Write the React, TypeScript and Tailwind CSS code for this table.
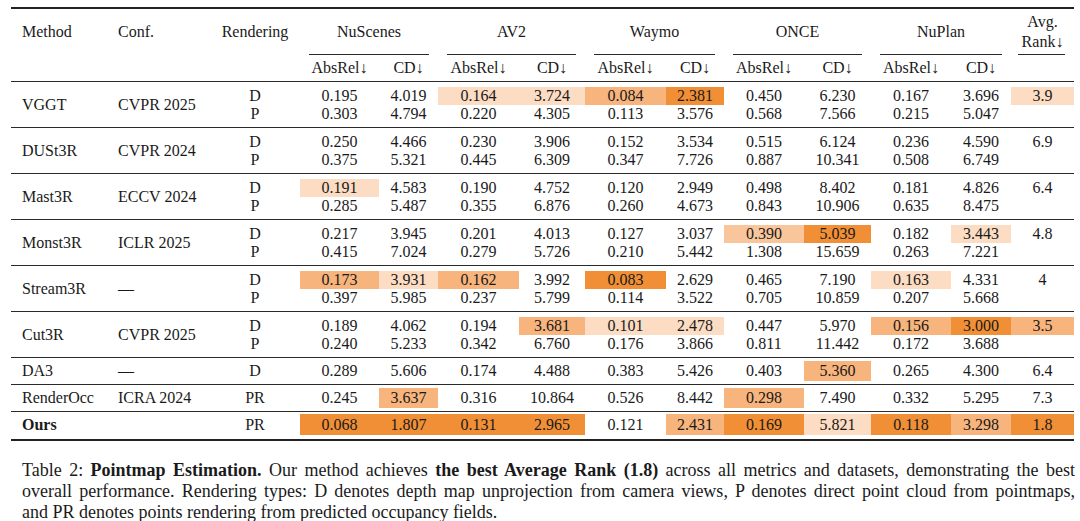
import React from "react";

const COLS =
  "grid grid-cols-[96px_103px_90px_79px_59px_81px_66px_81px_58px_80px_67px_80px_60px_63px]";

const HL: Record<string, string> = {
  l: "bg-[#fcdcc2]",
  m: "bg-[#f7b47c]",
  lm: "bg-[#f9c59a]",
  d: "bg-[#f08f35]",
};

type Row = {
  m: string;
  c: string;
  r: string[];
  v: string[][];
  avg: string;
  hl: Record<number, string>;
  avgHl?: string;
  bold?: boolean;
};

const rows: Row[] = [
  {
    m: "VGGT",
    c: "CVPR 2025",
    r: ["D", "P"],
    v: [
      ["0.195", "4.019", "0.164", "3.724", "0.084", "2.381", "0.450", "6.230", "0.167", "3.696"],
      ["0.303", "4.794", "0.220", "4.305", "0.113", "3.576", "0.568", "7.566", "0.215", "5.047"],
    ],
    avg: "3.9",
    hl: { 2: "l", 3: "l", 4: "m", 5: "d" },
    avgHl: "l",
  },
  {
    m: "DUSt3R",
    c: "CVPR 2024",
    r: ["D", "P"],
    v: [
      ["0.250", "4.466", "0.230", "3.906", "0.152", "3.534", "0.515", "6.124", "0.236", "4.590"],
      ["0.375", "5.321", "0.445", "6.309", "0.347", "7.726", "0.887", "10.341", "0.508", "6.749"],
    ],
    avg: "6.9",
    hl: {},
  },
  {
    m: "Mast3R",
    c: "ECCV 2024",
    r: ["D", "P"],
    v: [
      ["0.191", "4.583", "0.190", "4.752", "0.120", "2.949", "0.498", "8.402", "0.181", "4.826"],
      ["0.285", "5.487", "0.355", "6.876", "0.260", "4.673", "0.843", "10.906", "0.635", "8.475"],
    ],
    avg: "6.4",
    hl: { 0: "l" },
  },
  {
    m: "Monst3R",
    c: "ICLR 2025",
    r: ["D", "P"],
    v: [
      ["0.217", "3.945", "0.201", "4.013", "0.127", "3.037", "0.390", "5.039", "0.182", "3.443"],
      ["0.415", "7.024", "0.279", "5.726", "0.210", "5.442", "1.308", "15.659", "0.263", "7.221"],
    ],
    avg: "4.8",
    hl: { 6: "lm", 7: "d", 9: "l" },
  },
  {
    m: "Stream3R",
    c: "—",
    r: ["D", "P"],
    v: [
      ["0.173", "3.931", "0.162", "3.992", "0.083", "2.629", "0.465", "7.190", "0.163", "4.331"],
      ["0.397", "5.985", "0.237", "5.799", "0.114", "3.522", "0.705", "10.859", "0.207", "5.668"],
    ],
    avg: "4",
    hl: { 0: "m", 1: "l", 2: "m", 4: "d", 8: "l" },
  },
  {
    m: "Cut3R",
    c: "CVPR 2025",
    r: ["D", "P"],
    v: [
      ["0.189", "4.062", "0.194", "3.681", "0.101", "2.478", "0.447", "5.970", "0.156", "3.000"],
      ["0.240", "5.233", "0.342", "6.760", "0.176", "3.866", "0.811", "11.442", "0.172", "3.688"],
    ],
    avg: "3.5",
    hl: { 3: "m", 4: "l", 5: "l", 8: "m", 9: "d" },
    avgHl: "m",
  },
  {
    m: "DA3",
    c: "—",
    r: ["D"],
    v: [["0.289", "5.606", "0.174", "4.488", "0.383", "5.426", "0.403", "5.360", "0.265", "4.300"]],
    avg: "6.4",
    hl: { 7: "m" },
  },
  {
    m: "RenderOcc",
    c: "ICRA 2024",
    r: ["PR"],
    v: [["0.245", "3.637", "0.316", "10.864", "0.526", "8.442", "0.298", "7.490", "0.332", "5.295"]],
    avg: "7.3",
    hl: { 1: "m", 6: "m" },
  },
  {
    m: "Ours",
    c: "",
    r: ["PR"],
    v: [["0.068", "1.807", "0.131", "2.965", "0.121", "2.431", "0.169", "5.821", "0.118", "3.298"]],
    avg: "1.8",
    hl: { 0: "d", 1: "d", 2: "d", 3: "d", 5: "m", 6: "d", 7: "l", 8: "d", 9: "m" },
    avgHl: "d",
    bold: true,
  },
];

const datasets = ["NuScenes", "AV2", "Waymo", "ONCE", "NuPlan"];

function TwoLineRow({ row }: { row: Row }) {
  return (
    <div className={`${COLS} border-t border-[#2a2a2a] pt-[5px] pb-[5px] leading-[18px]`}>
      <div className="flex items-center pl-[11px]">{row.m}</div>
      <div className="flex items-center pl-[11px]">{row.c}</div>
      <div className="flex flex-col items-center">
        <div className="h-[18px] leading-[18px]">{row.r[0]}</div>
        <div className="h-[17px] leading-[17px]">{row.r[1]}</div>
      </div>
      {row.v[0].map((val, i) => (
        <div key={i} className="flex flex-col">
          <div className={`h-[18px] leading-[18px] text-center ${row.hl[i] ? HL[row.hl[i]] : ""}`}>
            {val}
          </div>
          <div className="h-[17px] leading-[17px] text-center">{row.v[1][i]}</div>
        </div>
      ))}
      <div className="flex flex-col">
        <div className={`h-[18px] leading-[18px] text-center ${row.avgHl ? HL[row.avgHl] : ""}`}>
          {row.avg}
        </div>
        <div className="h-[17px]" />
      </div>
    </div>
  );
}

function OneLineRow({ row, last }: { row: Row; last?: boolean }) {
  const h = last ? "h-[21px] leading-[21px]" : "h-[20px] leading-[20px]";
  return (
    <div className={`${COLS} border-t border-[#2a2a2a] ${last ? "pt-[2px] pb-[4px]" : "pt-[3px] pb-[3px]"}`}>
      <div className={`${h} pl-[11px] ${row.bold ? "font-bold" : ""}`}>{row.m}</div>
      <div className={`${h} pl-[11px]`}>{row.c}</div>
      <div className={`${h} text-center`}>{row.r[0]}</div>
      {row.v[0].map((val, i) => (
        <div key={i} className={`${h} text-center ${row.hl[i] ? HL[row.hl[i]] : ""}`}>
          {val}
        </div>
      ))}
      <div className={`${h} text-center ${row.avgHl ? HL[row.avgHl] : ""}`}>{row.avg}</div>
    </div>
  );
}

export default function App() {
  return (
    <div className="w-[1080px] h-[521px] bg-white overflow-hidden text-[#1a1a1a] font-['Liberation_Serif'] text-[16px] leading-[18px]">
      <div className="ml-[11px] mt-[7px] w-[1063px]">
        <div className="h-[2px] bg-[#222]" />
        {/* header row 1 */}
        <div className={`${COLS} h-[46px]`}>
          <div className="flex items-center pl-[11px]">Method</div>
          <div className="flex items-center pl-[11px]">Conf.</div>
          <div className="flex items-center justify-center">Rendering</div>
          {datasets.map((d) => (
            <div key={d} className="col-span-2 flex flex-col">
              <div className="flex-1 flex items-center justify-center">{d}</div>
              <div className="h-px mx-[9px] bg-[#2a2a2a]" />
            </div>
          ))}
          <div className="flex flex-col">
            <div className="flex-1 flex flex-col items-center justify-center leading-[20px]">
              <span>Avg.</span>
              <span>Rank↓</span>
            </div>
            <div className="h-px ml-[7px] mr-[9px] bg-[#2a2a2a]" />
          </div>
        </div>
        {/* header row 2 */}
        <div className={`${COLS} h-[26px] items-center`}>
          <div />
          <div />
          <div />
          {datasets.map((d) => (
            <React.Fragment key={d}>
              <div className="text-center">AbsRel↓</div>
              <div className="text-center">CD↓</div>
            </React.Fragment>
          ))}
          <div />
        </div>
        {rows.map((row, idx) =>
          row.v.length === 2 ? (
            <TwoLineRow key={row.m} row={row} />
          ) : (
            <OneLineRow key={row.m} row={row} last={idx === rows.length - 1} />
          )
        )}
        <div className="h-[2px] bg-[#222]" />
      </div>
      <div className="ml-[22px] mt-[19px] w-[1053px] text-[18px] leading-[21px] text-[#1a1a1a]">
        <div className="h-[21px] whitespace-nowrap text-justify [text-align-last:justify]">
          Table 2: <b>Pointmap Estimation.</b> Our method achieves <b>the best Average Rank (1.8)</b> across all
          metrics and datasets, demonstrating the best
        </div>
        <div className="h-[21px] whitespace-nowrap text-justify [text-align-last:justify]">
          overall performance. Rendering types: D denotes depth map unprojection from camera views, P denotes direct
          point cloud from pointmaps,
        </div>
        <div className="h-[21px] whitespace-nowrap">
          and PR denotes points rendering from predicted occupancy fields.
        </div>
      </div>
    </div>
  );
}
